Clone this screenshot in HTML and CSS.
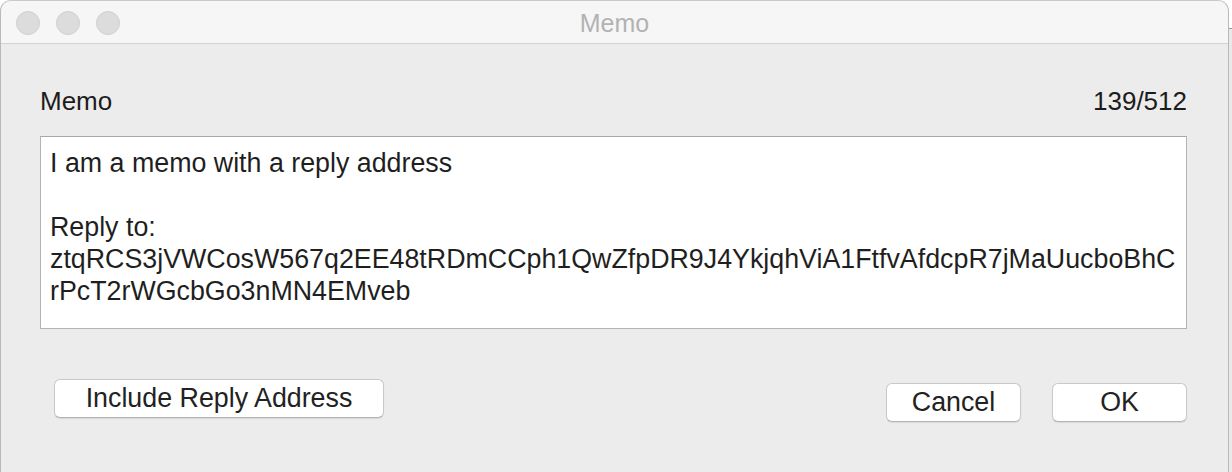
FILE: index.html
```html
<!DOCTYPE html>
<html>
<head>
<meta charset="utf-8">
<link rel="stylesheet" href="styles.css">
</head>
<body>
<div class="desk">
  <div class="window">
    <div class="titlebar">
      <div class="lights">
        <span class="light"></span>
        <span class="light"></span>
        <span class="light"></span>
      </div>
      <div class="title">Memo</div>
    </div>
    <div class="content">
      <div class="label-row">
        <span class="label">Memo</span>
        <span class="counter">139/512</span>
      </div>
      <div class="memo-box">
        <div class="line">I am a memo with a reply address</div>
        <div class="line">&nbsp;</div>
        <div class="line">Reply to:</div>
        <div class="line">ztqRCS3jVWCosW567q2EE48tRDmCCph1QwZfpDR9J4YkjqhViA1FtfvAfdcpR7jMaUucboBhC</div>
        <div class="line">rPcT2rWGcbGo3nMN4EMveb</div>
      </div>
      <div class="button-row">
        <button class="btn btn-include">Include Reply Address</button>
        <div class="right-buttons">
          <button class="btn btn-small">Cancel</button>
          <button class="btn btn-small">OK</button>
        </div>
      </div>
    </div>
  </div>
  <div class="backdrop"></div>
</div>
</body>
</html>
```
FILE: styles.css
```css
html, body {
  margin: 0;
  padding: 0;
  width: 1232px;
  height: 472px;
  overflow: hidden;
  background: #ffffff;
  font-family: "Liberation Sans", Arial, sans-serif;
}

.desk {
  display: flex;
  height: 472px;
}

.window {
  width: 1229px;
  flex: none;
  height: 490px;
  box-sizing: border-box;
  border: 1px solid #b9b9b9;
  border-top-color: #c9c9c9;
  border-radius: 11px 11px 0 0;
  background: #ececec;
  overflow: hidden;
}

.backdrop {
  flex: 1;
  margin-top: 28px;
  background: #e9e9e9;
  border-top: 1px solid #9a9a9a;
}

.titlebar {
  height: 42px;
  background: #f6f6f6;
  border-bottom: 1px solid #d3d3d3;
  display: flex;
  align-items: center;
  position: relative;
}

.lights {
  display: flex;
  gap: 16px;
  padding-left: 15px;
  padding-top: 1px;
}

.light {
  width: 22px;
  height: 22px;
  border-radius: 50%;
  background: #dcdcdc;
  border: 1px solid #cfcfcf;
}

.title {
  position: absolute;
  left: 0;
  right: 0;
  top: 7px;
  text-align: center;
  font-size: 25px;
  line-height: 30px;
  color: #b2b2b2;
}

.content {
  padding: 41px 41px 0 39px;
}

.label-row {
  display: flex;
  justify-content: space-between;
  font-size: 26px;
  line-height: 32px;
  color: #1c1c1c;
}

.memo-box {
  margin-top: 19px;
  height: 193px;
  box-sizing: border-box;
  background: #ffffff;
  border: 1px solid #b4b4b4;
  border-top-color: #a8a8a8;
  padding: 10px 7px 0 9px;
  font-size: 26.8px;
  line-height: 32px;
  color: #1f1f1f;
  white-space: nowrap;
  overflow: hidden;
}

.button-row {
  margin-top: 50px;
  display: flex;
  justify-content: space-between;
  align-items: flex-start;
  padding-left: 14px;
}

.right-buttons {
  display: flex;
  gap: 31px;
  margin-top: 4px;
}

.btn {
  height: 39px;
  box-sizing: border-box;
  background: #ffffff;
  border: 1px solid #c9c9c9;
  border-bottom-color: #b3b3b3;
  border-radius: 6px;
  box-shadow: 0 1px 1px rgba(0, 0, 0, 0.08);
  font-family: "Liberation Sans", Arial, sans-serif;
  font-size: 26.8px;
  line-height: 37px;
  color: #222222;
  padding: 0;
  margin: 0;
}

.btn-include {
  width: 330px;
}

.btn-small {
  width: 135px;
}
```
